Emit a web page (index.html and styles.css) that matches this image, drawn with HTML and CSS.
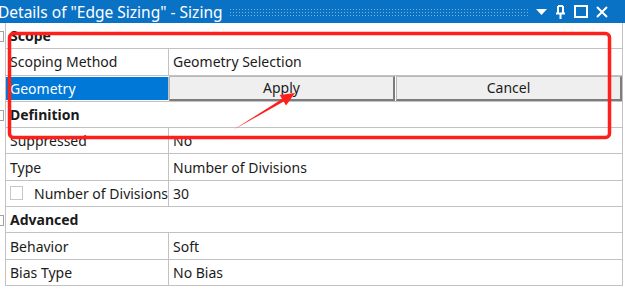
FILE: index.html
```html
<!DOCTYPE html>
<html lang="en">
<head>
  <meta charset="UTF-8">
  <title>Details of "Edge Sizing" - Sizing</title>
  <link rel="stylesheet" href="styles.css">
</head>
<body>
  <div class="panel">
    <div class="titlebar">
      <span class="title">Details of "Edge Sizing" - Sizing</span>
      <div class="dots"></div>
      <div class="tools">
        <svg width="11" height="6" viewBox="0 0 11 6"><path d="M0 0h11L5.5 6z" fill="#fff"/></svg>
        <svg width="11" height="14" viewBox="0 0 11 14"><path d="M3 1h5M3 1v7M8 1v7M1 8.5h9M5.5 9v5" stroke="#fff" stroke-width="2" fill="none"/></svg>
        <svg width="14" height="13" viewBox="0 0 14 13"><rect x="1" y="1" width="12" height="11" stroke="#fff" stroke-width="2" fill="none"/></svg>
        <svg width="12" height="12" viewBox="0 0 12 12"><path d="M1 1l10 10M11 1L1 11" stroke="#fff" stroke-width="2"/></svg>
      </div>
    </div>

    <div class="table">
      <div class="row group"><div class="cell">Scope</div></div>
      <div class="row">
        <div class="cell name">Scoping Method</div>
        <div class="cell">Geometry Selection</div>
      </div>
      <div class="row">
        <div class="cell name selected">Geometry</div>
        <div class="cell buttons">
          <button class="btn">Apply</button>
          <button class="btn">Cancel</button>
        </div>
      </div>
      <div class="row group"><div class="cell">Definition</div></div>
      <div class="row">
        <div class="cell name">Suppressed</div>
        <div class="cell">No</div>
      </div>
      <div class="row">
        <div class="cell name">Type</div>
        <div class="cell">Number of Divisions</div>
      </div>
      <div class="row">
        <div class="cell name"><span class="check"></span>Number of Divisions</div>
        <div class="cell">30</div>
      </div>
      <div class="row group"><div class="cell">Advanced</div></div>
      <div class="row">
        <div class="cell name">Behavior</div>
        <div class="cell">Soft</div>
      </div>
      <div class="row">
        <div class="cell name">Bias Type</div>
        <div class="cell">No Bias</div>
      </div>
    </div>

    <!-- red markup drawn over the screenshot -->
    <svg class="annot" width="625" height="295" viewBox="0 0 625 295">
      <rect x="9.5" y="33.5" width="600" height="104" rx="4" fill="none" stroke="#ff1f1a" stroke-width="3.5"/>
      <polygon points="233,130 282.1,98.9 279.8,95 295,93 286,105.4 283.7,101.5" fill="#ff1f1a"/>
    </svg>
  </div>
</body>
</html>
```

FILE: styles.css
```css
body {
  margin: 0;
  font-family: "Noto Sans", "Open Sans", sans-serif;
  font-size: 14px;
  color: #1b1b1b;
  background: #fff;
}

.panel {
  position: relative;
  width: 625px;
  height: 295px;
  overflow: hidden;
}

.titlebar {
  height: 23px;
  background-color: #0a72c5;
  color: #fff;
  display: flex;
  align-items: center;
}

.title {
  font-size: 15.5px;
  margin-left: -2px;
  white-space: nowrap;
}

.dots {
  flex: 1;
  height: 8px;
  margin: 0 6px;
  background-image: radial-gradient(circle, rgba(255, 255, 255, 0.45) 0.7px, transparent 1px);
  background-size: 3px 3px;
}

.tools {
  display: flex;
  align-items: center;
  gap: 8px;
  padding-right: 17px;
}

.table {
  margin-left: 5px;
  width: 616px;
  border-left: 1px solid #c2c2c2;
  border-right: 1px solid #c2c2c2;
}

.row {
  display: grid;
  grid-template-columns: 163px 1fr;
  height: 26.3px;
  box-sizing: border-box;
  border-bottom: 1px solid #c2c2c2;
}

.cell {
  display: flex;
  align-items: center;
  padding-left: 4px;
  white-space: nowrap;
  overflow: hidden;
}

.name {
  border-right: 1px solid #c2c2c2;
}

.group {
  grid-template-columns: 1fr;
  font-weight: bold;
  position: relative;
}

.group::before {
  content: "";
  position: absolute;
  left: -9px;
  top: 8px;
  width: 5px;
  height: 9px;
  border: 1px solid #a0a0a0;
  background: #fff;
}

.selected {
  background-color: #0078d7;
  color: #fff;
  margin: 1px 0;
}

.buttons {
  padding: 0;
  gap: 1px;
}

.btn {
  flex: 1;
  height: 25px;
  font: inherit;
  color: #1b1b1b;
  background: #efefef;
  border: 1px solid #b8b8b8;
  border-right: 2px solid #7c7c7c;
  border-bottom: 2px solid #7c7c7c;
  padding: 0;
}

.check {
  display: inline-block;
  width: 12px;
  height: 12px;
  border: 1px solid #c8c8c8;
  margin: 0 11px 0 0;
}

.annot {
  position: absolute;
  left: 0;
  top: 0;
  pointer-events: none;
}
```
